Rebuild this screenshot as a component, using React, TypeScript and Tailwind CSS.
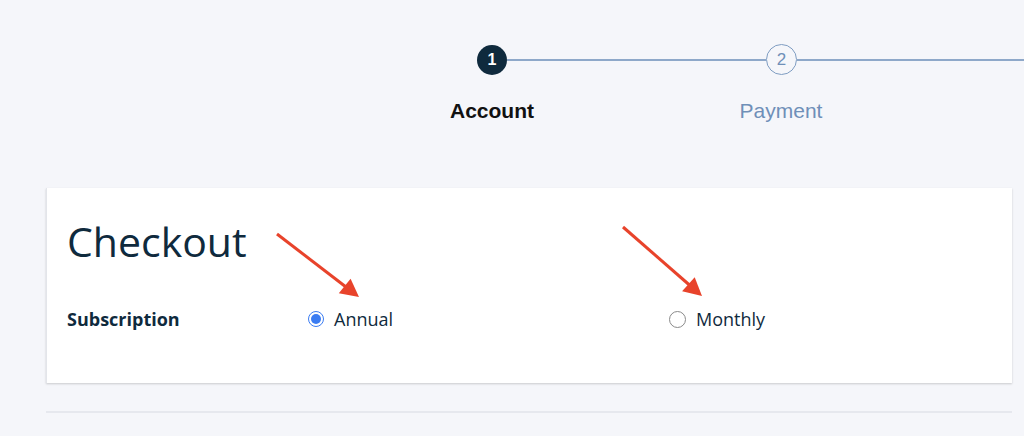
import React from "react";

const sans = { fontFamily: '"Liberation Sans", Arial, sans-serif' };
const open = { fontFamily: '"Open Sans", "Noto Sans", sans-serif' };

function Radio({ checked, label }: { checked?: boolean; label: string }) {
  return (
    <label className="flex items-center gap-[10px]">
      {checked ? (
        <span className="flex h-[16px] w-[16px] items-center justify-center rounded-full border-[1.5px] border-[#3b7cf2] bg-white">
          <span className="h-[10px] w-[10px] rounded-full bg-[#3b7cf2]" />
        </span>
      ) : (
        <span className="h-[17px] w-[17px] rounded-full border-[1.5px] border-[#8a8a8a] bg-white" />
      )}
      <span className="text-[18px] leading-6 text-[#0f2a3d]">{label}</span>
    </label>
  );
}

function Arrow({ x1, y1, line, head }: { x1: number; y1: number; line: [number, number]; head: string }) {
  return (
    <>
      <line x1={x1} y1={y1} x2={line[0]} y2={line[1]} stroke="#e8432b" strokeWidth={3} />
      <polygon points={head} fill="#e8432b" />
    </>
  );
}

export default function App() {
  return (
    <div className="relative h-[436px] w-[1024px] overflow-hidden bg-[#f5f6fa]" style={open}>
      {/* stepper */}
      <div className="pt-[44px]" style={sans}>
        <div className="flex items-center pl-[477px]">
          <div className="flex h-[30px] w-[30px] shrink-0 items-center justify-center rounded-full bg-[#0f2a3d] text-[16px] font-bold text-white">
            1
          </div>
          <div className="h-[2px] w-[259px] shrink-0 bg-[#8ea8c9]" />
          <div className="flex h-[31px] w-[31px] shrink-0 items-center justify-center rounded-full border-[1.5px] border-[#7f9dc2] text-[17px] text-[#6f8fb8]">
            2
          </div>
          <div className="h-[2px] flex-1 bg-[#8ea8c9]" />
        </div>
        <div className="mt-[24px] flex pl-[392px] text-[21px] leading-6">
          <div className="w-[200px] text-center font-bold text-[#111]">Account</div>
          <div className="ml-[89px] w-[200px] text-center text-[#6f8fb8]">Payment</div>
        </div>
      </div>

      {/* card */}
      <div className="mx-[46px] mt-[65px] w-[966px] border-l border-[#e3e5ea] bg-white pb-[52px] pl-[20px] pt-[28px] shadow-[0_1px_2px_rgba(0,0,0,0.18)]">
        <h1 className="text-[41px] leading-[50px] text-[#0f2a3d]">Checkout</h1>
        <div className="mt-[41px] flex items-center">
          <div className="w-[241px] text-[18px] font-bold leading-6 text-[#0f2a3d]">Subscription</div>
          <div className="w-[361px]">
            <Radio checked label="Annual" />
          </div>
          <Radio label="Monthly" />
        </div>
      </div>

      <div className="mx-[46px] mt-[28px] h-[2px] w-[966px] bg-[#e6e8ee]" />

      {/* annotation arrows */}
      <svg className="pointer-events-none absolute left-0 top-0" width="1024" height="436">
        <Arrow x1={277} y1={234} line={[346, 287]} head="359,297 338.8,293.2 350.6,278.8" />
        <Arrow x1={623} y1={227} line={[690, 285.5]} head="702,296 682.1,291.2 694.7,277.2" />
      </svg>
    </div>
  );
}
